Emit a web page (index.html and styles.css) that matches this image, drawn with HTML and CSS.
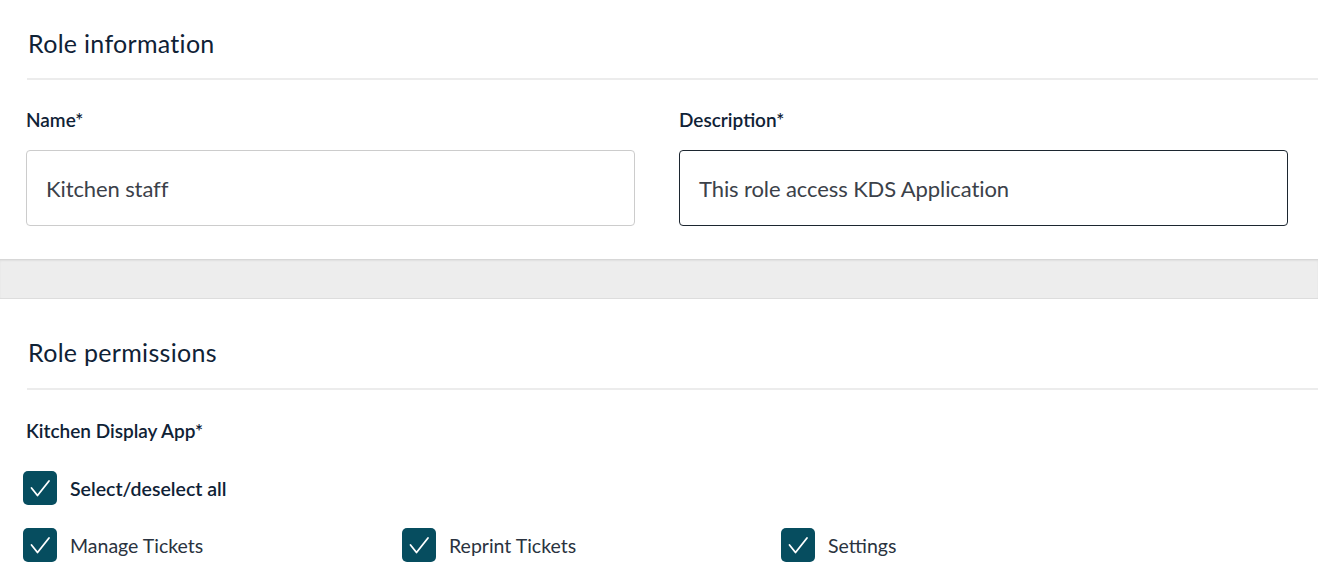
FILE: index.html
```html
<!DOCTYPE html>
<html>
<head>
<meta charset="utf-8">
<link rel="stylesheet" href="styles.css">
</head>
<body>
<section class="card card-top">
  <h2 class="card-title">Role information</h2>
  <div class="fields">
    <div class="field">
      <label class="label">Name*</label>
      <div class="input">Kitchen staff</div>
    </div>
    <div class="field">
      <label class="label">Description*</label>
      <div class="input input-focus">This role access KDS Application</div>
    </div>
  </div>
</section>
<div class="band"></div>
<section class="card card-bottom">
  <h2 class="card-title">Role permissions</h2>
  <div class="label group-label">Kitchen Display App*</div>
  <div class="check-row">
    <span class="box"><svg viewBox="0 0 34 34" width="34" height="34"><path d="M8.5 17l6 7.5L26 10" fill="none" stroke="#fff" stroke-width="1.8" stroke-linecap="round" stroke-linejoin="round"/></svg></span>
    <span class="check-label strong">Select/deselect all</span>
  </div>
  <div class="check-grid">
    <div class="check-row">
      <span class="box"><svg viewBox="0 0 34 34" width="34" height="34"><path d="M8.5 17l6 7.5L26 10" fill="none" stroke="#fff" stroke-width="1.8" stroke-linecap="round" stroke-linejoin="round"/></svg></span>
      <span class="check-label">Manage Tickets</span>
    </div>
    <div class="check-row">
      <span class="box"><svg viewBox="0 0 34 34" width="34" height="34"><path d="M8.5 17l6 7.5L26 10" fill="none" stroke="#fff" stroke-width="1.8" stroke-linecap="round" stroke-linejoin="round"/></svg></span>
      <span class="check-label">Reprint Tickets</span>
    </div>
    <div class="check-row">
      <span class="box"><svg viewBox="0 0 34 34" width="34" height="34"><path d="M8.5 17l6 7.5L26 10" fill="none" stroke="#fff" stroke-width="1.8" stroke-linecap="round" stroke-linejoin="round"/></svg></span>
      <span class="check-label">Settings</span>
    </div>
  </div>
</section>
</body>
</html>
```
FILE: styles.css
```css
html, body {
  margin: 0;
  padding: 0;
  background: #ffffff;
  font-family: "Lato", "Open Sans", sans-serif;
  color: #0f2236;
}
.card {
  background: #fff;
  padding-left: 27px;
}
.card-top {
  padding-bottom: 33px;
}
.card-title {
  margin: 0;
  font-size: 25px;
  font-weight: 400;
  line-height: 30px;
  letter-spacing: 0.3px;
  padding-top: 28px;
  padding-bottom: 20px;
  border-bottom: 2px solid #ececec;
  padding-left: 1px;
}
.fields {
  display: flex;
  gap: 45px;
  padding-right: 30px;
  margin-top: 29px;
}
.field {
  flex: 1;
  display: flex;
  flex-direction: column;
}
.label {
  font-size: 19px;
  font-weight: 600;
  line-height: 22px;
  margin-left: -1px;
  color: #0f2236;
}
.input {
  margin-top: 19px;
  margin-left: -1px;
  height: 74px;
  border: 1px solid #cccccc;
  border-radius: 4px;
  display: flex;
  align-items: center;
  padding-left: 19px;
  font-size: 22px;
  color: #3b4149;
  font-family: "Lato", sans-serif;
  font-weight: 400;
  letter-spacing: -0.1px;
}
.input-focus {
  border-color: #1c2630;
}
.band {
  height: 38px;
  background: #ededed;
  border-top: 1px solid #d7d7d7;
  border-bottom: 1px solid #dddddd;
  box-shadow: inset 0 1px 2px rgba(0,0,0,0.06);
}
.card-bottom .card-title {
  padding-top: 38px;
  padding-bottom: 21px;
}
.group-label {
  margin-top: 30px;
}
.card-bottom .check-row {
  margin-left: -4px;
}
.check-row {
  display: flex;
  align-items: center;
  gap: 13px;
}
.card-bottom > .check-row {
  margin-top: 29px;
}
.check-grid {
  display: grid;
  grid-template-columns: 379px 379px 1fr;
  margin-top: 23px;
}
.box {
  width: 34px;
  height: 34px;
  border-radius: 5px;
  background: #064d5f;
  display: inline-flex;
  flex: none;
}
.check-label {
  font-size: 19.5px;
  color: #2a3340;
}
.check-label.strong {
  font-weight: 600;
  color: #0f2236;
}
```
